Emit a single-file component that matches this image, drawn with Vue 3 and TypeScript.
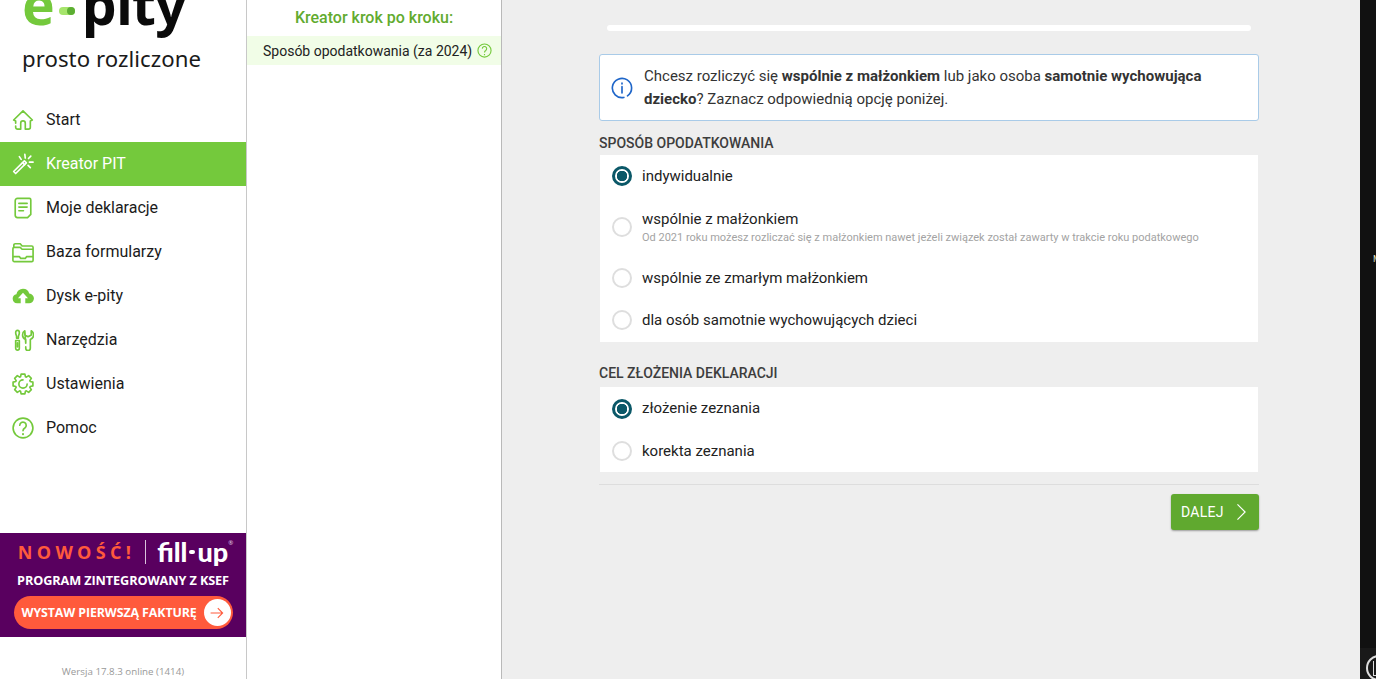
<script setup lang="ts">
interface Opt { label: string; sub?: string; checked?: boolean; cls: string }
const group1: Opt[] = [
  { label: 'indywidualnie', checked: true, cls: 'r1' },
  { label: 'wspólnie z małżonkiem', sub: 'Od 2021 roku możesz rozliczać się z małżonkiem nawet jeżeli związek został zawarty w trakcie roku podatkowego', cls: 'r2' },
  { label: 'wspólnie ze zmarłym małżonkiem', cls: 'r3' },
  { label: 'dla osób samotnie wychowujących dzieci', cls: 'r4' },
]
const group2: Opt[] = [
  { label: 'złożenie zeznania', checked: true, cls: 'r5' },
  { label: 'korekta zeznania', cls: 'r6' },
]
const nav = ['Start', 'Kreator PIT', 'Moje deklaracje', 'Baza formularzy', 'Dysk e-pity', 'Narzędzia', 'Ustawienia', 'Pomoc']

function gearPath(teeth: number, outer: number, inner: number): string {
  const pts: string[] = []
  const step = (Math.PI * 2) / teeth
  for (let t = 0; t < teeth; t++) {
    const a = t * step - Math.PI / 2
    const offs: [number, number][] = [[-0.42, inner], [-0.24, outer], [0.24, outer], [0.42, inner]]
    for (const [o, r] of offs) {
      const ang = a + o * step
      pts.push(`${(12 + r * Math.cos(ang)).toFixed(2)} ${(12 + r * Math.sin(ang)).toFixed(2)}`)
    }
  }
  return 'M' + pts.join('L') + 'Z'
}
const gear = gearPath(8, 11, 8.3)
</script>

<template>
  <div class="page">
    <aside class="side">
      <div class="logo">
        <div class="logo-mark"><span class="e">e</span><span class="toggle"><i></i></span><span class="pity">pity</span></div>
        <div class="tagline">prosto rozliczone</div>
      </div>
      <nav class="nav">
        <a v-for="(n, i) in nav" :key="n" class="nav-row" :class="{ active: i === 1 }">
          <svg class="nav-ico" viewBox="0 0 24 24" fill="none" stroke="currentColor" stroke-width="1.8" stroke-linecap="round" stroke-linejoin="round">
            <template v-if="i === 0">
              <path d="M4 15.500v-2.500L1.800 12 12 2l10.200 10L20 13v7a2 2 0 0 1-2 2h-3.500v-6.500a2.500 2.500 0 0 0-5 0V22H6a2 2 0 0 1-2-2v-1.500" />
            </template>
            <template v-else-if="i === 1">
              <path d="M1.800 20.200 13.500 8.500l2.200 2.200L4 22.400z" /><path d="M11.500 10.500l2.200 2.200M14 1.500l.5 4M20.500 3.500l-2.500 2.500M23 10h-4M20 16l-2.500-2.500M8 4l2 3" />
            </template>
            <template v-else-if="i === 2">
              <path d="M6 1.500h13a1.500 1.500 0 0 1 1.500 1.500v16l-3.500 3.500H6a2.500 2.500 0 0 1-2.500-2.500V4A2.500 2.500 0 0 1 6 1.500z" /><path d="M7.500 7h9M7.500 11h9M7.500 15h5" />
            </template>
            <template v-else-if="i === 3">
              <path d="M2 7V4.500A1.500 1.500 0 0 1 3.500 3H9l2 2.500h10.500A1.500 1.500 0 0 1 23 7v14a1.500 1.500 0 0 1-1.500 1.500h-19A1.500 1.500 0 0 1 1 21V8.500A1.500 1.500 0 0 1 2.500 7H9l2 2h12M1 17h7l1.500 2h5l1.500-2h7" />
            </template>
            <template v-else-if="i === 4">
              <path fill="currentColor" stroke="none" d="M12 4a7 7 0 0 1 6.800 5.400A5.200 5.200 0 0 1 18.500 20H14.500v-5.500h3L12 8.500l-5.500 6h3V20H5.500A5 5 0 0 1 4.800 10.100 7.200 7.200 0 0 1 12 4z" />
            </template>
            <template v-else-if="i === 5">
              <path d="M6 1.500c1.300 0 2 1 2 2.500 0 1.500-.7 3-1 4v2H5V8c-.3-1-1-2.500-1-4 0-1.500.7-2.500 2-2.500zM4 12.500h4V21a2 2 0 0 1-4 0zM6 15v4.500" /><path d="M14 2v4.500l3.500 2 3.500-2V2c1.800 1 2.500 3 2.500 4.500 0 2.500-1.500 4.200-3.500 5V21a2.500 2.500 0 0 1-5 0v-1.500M15 15.500v-4c-2-.8-3.500-2.500-3.500-5C11.500 5 12.200 3 14 2z" />
            </template>
            <template v-else-if="i === 6">
              <path :d="gear" /><path d="M16.500 12A4.500 4.500 0 1 1 12 7.500" />
            </template>
            <template v-else>
              <circle cx="12" cy="12" r="10.800" /><path d="M8.500 9a3.500 3.500 0 1 1 5.500 3c-1.300.8-2 1.500-2 3" /><path d="M12 18.500v.3" stroke-width="2.200" />
            </template>
          </svg>
          <span>{{ n }}</span>
        </a>
      </nav>
      <div class="grow"></div>
      <div class="banner">
        <div class="b-top"><span class="nowosc">NOWOŚĆ!</span><span class="b-sep"></span><span class="fill">fill<i></i>up</span><sup>®</sup></div>
        <div class="b-mid">PROGRAM ZINTEGROWANY Z KSEF</div>
        <div class="b-btn"><span>WYSTAW PIERWSZĄ FAKTURĘ</span>
          <span class="b-arrow"><svg viewBox="0 0 20 20" width="16" height="16" fill="none" stroke="#ff5a3c" stroke-width="1.400"><path d="M2 10h15M11 4l6 6-6 6" /></svg></span>
        </div>
      </div>
      <div class="version">Wersja 17.8.3 online (1414)</div>
    </aside>

    <section class="steps">
      <h2>Kreator krok po kroku:</h2>
      <div class="step">
        <span>Sposób opodatkowania (za 2024)</span>
        <svg viewBox="0 0 24 24" width="15" height="15" fill="none" stroke="#74c93c" stroke-width="1.800"><circle cx="12" cy="12" r="10.500" /><path d="M8.500 9a3.500 3.500 0 1 1 5.500 3c-1.300.8-2 1.500-2 3M12 17.500v2" /></svg>
      </div>
    </section>

    <main class="main">
      <div class="content">
        <div class="progress"></div>
        <div class="info">
          <svg viewBox="0 0 24 24" width="22" height="22" fill="none" stroke="#1f66c9" stroke-width="1.800" stroke-linecap="round"><path d="M14 22.300A10.500 10.500 0 1 1 18 20.600" /><path d="M12 10.500v7M12 6.500v1" /></svg>
          <p>Chcesz rozliczyć się <b>wspólnie z małżonkiem</b> lub jako osoba <b>samotnie wychowująca dziecko</b>? Zaznacz odpowiednią opcję poniżej.</p>
        </div>
        <h3 class="label l1">Sposób opodatkowania</h3>
        <div class="card c1">
          <div v-for="o in group1" :key="o.label" class="opt" :class="o.cls">
            <span class="radio" :class="{ on: o.checked }"></span>
            <div class="opt-text"><div class="opt-label">{{ o.label }}</div><div v-if="o.sub" class="opt-sub">{{ o.sub }}</div></div>
          </div>
        </div>
        <h3 class="label l2">Cel złożenia deklaracji</h3>
        <div class="card c2">
          <div v-for="o in group2" :key="o.label" class="opt" :class="o.cls">
            <span class="radio" :class="{ on: o.checked }"></span>
            <div class="opt-text"><div class="opt-label">{{ o.label }}</div></div>
          </div>
        </div>
        <hr class="rule" />
        <div class="actions">
          <button class="next" type="button">DALEJ
            <svg viewBox="0 0 12 20" width="11" height="18" fill="none" stroke="#fff" stroke-width="1.300"><path d="M1.500 1.500 10 10l-8.500 8.500" /></svg>
          </button>
        </div>
      </div>
    </main>

    <div class="dark">
      <span class="dark-m">M</span>
      <div class="dark-foot"><span class="dark-circle"><i></i></span></div>
    </div>
  </div>
</template>

<style>
html, body { margin: 0; overflow: hidden; }
</style>

<style scoped>
.page { display: flex; width: 1376px; height: 679px; overflow: hidden; font-family: Roboto, "Liberation Sans", sans-serif; background: #fff; }
.side { width: 246px; flex: none; display: flex; flex-direction: column; background: #fff; border-right: 1px solid #c8c8c8; }
.logo { height: 98px; padding-left: 22px; box-sizing: border-box; overflow: hidden; }
.logo-mark { display: flex; align-items: baseline; height: 42px; margin-top: -21px; font-family: "Noto Sans", Roboto, sans-serif; font-weight: 700; font-size: 55px; line-height: 50px; color: #0a0a0a; }
.e { color: #74c93c; width: 37px; }
.toggle { width: 16px; height: 8px; border-radius: 4px; background: #a6e56c; align-self: flex-start; margin: 28px 7px 0 0; display: flex; justify-content: flex-end; }
.toggle i { width: 8px; height: 8px; border-radius: 50%; background: #5cae33; }
.pity { letter-spacing: -0.6px; }
.tagline { margin-top: 23px; font-family: "Noto Sans", sans-serif; font-size: 22.200px; line-height: 30px; color: #1a1a1a; letter-spacing: 0.05px; }
.nav { display: flex; flex-direction: column; }
.nav-row { height: 44px; display: flex; align-items: center; padding-left: 12px; gap: 12px; font-size: 16px; color: #1b1b1b; }
.nav-row span { padding-bottom: 2px; }
.nav-row.active { background: #74c93c; color: #fff; }
.nav-ico { width: 22px; height: 22px; flex: none; color: #74c93c; }
.active .nav-ico { color: #fff; }
.grow { flex: 1; }
.banner { height: 104px; background: #59005f; display: flex; flex-direction: column; align-items: center; box-sizing: border-box; padding-top: 6px; font-family: "Open Sans", sans-serif; }
.b-top { display: flex; align-items: center; height: 25px; margin-left: 5px; }
.nowosc { color: #ff5a3c; font-weight: 700; font-size: 18px; letter-spacing: 4.300px; }
.b-sep { width: 1px; height: 24px; background: #d9c4dc; margin: 0 11px 0 10px; }
.fill { color: #fff; font-family: Lato, sans-serif; font-weight: 900; font-size: 27px; line-height: 25px; display: flex; align-items: center; }
.fill i { width: 6px; height: 4px; background: #fff; border-radius: 2px; margin: 0 2px; }
sup { color: #e8d8ea; font-size: 6px; align-self: flex-start; margin: 0; line-height: 8px; }
.b-mid { color: #fff; font-weight: 700; font-size: 12.700px; margin-top: 8px; line-height: 16px; letter-spacing: -0.1px; }
.b-btn { margin-top: 8px; width: 219px; height: 33px; border-radius: 17px; background: #ff5a3c; color: #fff; font-weight: 700; font-size: 12.400px; letter-spacing: -0.1px; display: flex; align-items: center; justify-content: space-between; padding: 0 2px 0 8px; box-sizing: border-box; }
.b-arrow { width: 27px; height: 27px; border-radius: 50%; background: #fff; display: flex; align-items: center; justify-content: center; }
.version { height: 42px; display: flex; align-items: flex-end; justify-content: center; box-sizing: border-box; font-family: "Open Sans", sans-serif; font-size: 9.750px; line-height: 14px; color: #999; }
.steps { width: 255px; flex: none; box-sizing: border-box; border-right: 1px solid #b9b9b9; background: #fff; }
.steps h2 { margin: 0; height: 36px; padding-top: 9px; box-sizing: border-box; text-align: center; font-size: 16px; font-weight: 500; line-height: 18px; color: #62ab2f; }
.step { height: 29px; background: #f1fde7; display: flex; align-items: center; padding-left: 16px; gap: 5px; font-size: 14px; color: #222; }
.main { flex: 1; background: #eee; display: flex; justify-content: center; }
.content { width: 660px; margin-left: -4px; }
.progress { height: 6px; margin: 25px 8px 0; background: #fff; border-radius: 3px; }
.info { margin-top: 23px; height: 67px; box-sizing: border-box; background: #fff; border: 1px solid #a9cbe8; border-radius: 3px; display: flex; align-items: center; padding: 0 20px 0 11px; gap: 11px; }
.info svg { flex: none; }
.info p { margin: 0; font-size: 15px; line-height: 23px; color: #333; }
.label { margin: 0; font-size: 14px; font-weight: 500; line-height: 16px; color: #3d3d3d; text-transform: uppercase; }
.l1 { margin-top: 14px; }
.l2 { margin-top: 23px; }
.card { margin: 4px 1px 0; background: #fff; display: flex; flex-direction: column; }
.c1 { height: 187px; }
.c2 { height: 85px; margin-top: 6px; }
.opt { display: flex; align-items: center; padding-left: 12px; gap: 10px; }
.r1 { height: 42px; }
.r2 { height: 60px; }
.r3 { height: 42px; }
.r4 { height: 42px; }
.r5 { height: 42px; }
.r5 .radio { margin-top: 2px; }
.r6 { height: 43px; }
.radio { width: 20px; height: 20px; box-sizing: border-box; border-radius: 50%; border: 2px solid #dedede; flex: none; }
.radio.on { border: 3px solid #0b5868; background: radial-gradient(circle, #0b5868 0 5px, #fff 5.500px); }
.opt-label { font-size: 15px; line-height: 18px; color: #222; }
.opt-sub { font-size: 11px; line-height: 13px; margin-top: 3px; color: #a3a3a3; white-space: nowrap; }
.rule { margin: 12px 0 0; border: 0; border-top: 1px solid #ddd; }
.actions { display: flex; justify-content: flex-end; margin-top: 9px; }
.next { width: 88px; height: 36px; border: 0; border-radius: 3px; background: #60a92f; color: #fff; font-family: Roboto, sans-serif; font-size: 14px; font-weight: 400; letter-spacing: 0.3px; display: flex; align-items: center; gap: 12px; padding: 0 0 0 10px; box-shadow: 0 1px 2px rgba(0,0,0,.35); }
.dark { width: 16px; flex: none; background: #111; position: relative; overflow: hidden; display: flex; flex-direction: column; justify-content: flex-end; }
.dark-m { position: absolute; left: 13px; top: 254px; color: #ddb; font-size: 9px; line-height: 10px; font-family: Roboto, sans-serif; }
.dark-foot { height: 31px; background: #191919; position: relative; }
.dark-circle { position: absolute; left: 6px; top: 7px; width: 26px; height: 26px; box-sizing: border-box; border: 2px solid #ddd; border-radius: 50%; }
.dark-circle i { position: absolute; left: 5px; top: 4px; width: 6px; height: 14px; border: 1px solid #ddd; border-top: 0; }
</style>
